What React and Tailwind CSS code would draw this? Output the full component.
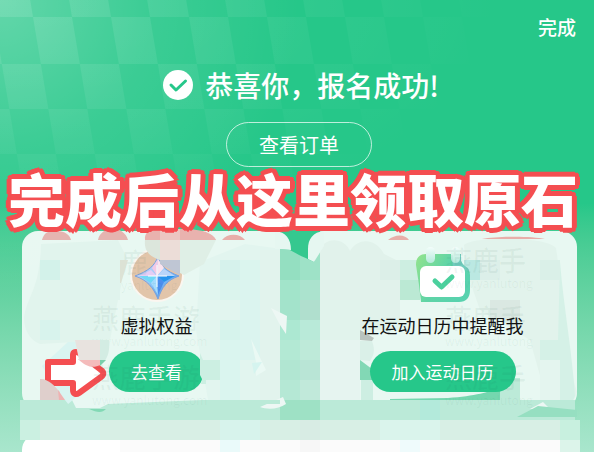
import React from "react";

const ROWS = [
  [0, 17],
  [17, 64],
  [64, 109],
  [109, 154],
  [154, 200],
];

function Checkers() {
  const slant = (y) => (y - 17) / 6;
  const tiles = [];
  ROWS.forEach(([top, bottom], row) => {
    for (let col = -3; col < 14; col += 1) {
      if ((col + row) % 2 !== 0) continue;
      const x = -6 + col * 39;
      tiles.push(
        <polygon
          key={`${row}-${col}`}
          points={`${x + slant(top)},${top} ${x + 39 + slant(top)},${top} ${x + 39 + slant(bottom)},${bottom} ${x + slant(bottom)},${bottom}`}
        />
      );
    }
  });
  return (
    <svg className="pointer-events-none absolute top-0 left-0 w-full" viewBox="0 0 594 452" aria-hidden="true">
      <defs>
        <radialGradient id="glow" gradientUnits="userSpaceOnUse" cx="0" cy="0" r="300">
          <stop offset="0" stopColor="#fff" stopOpacity="0.28" />
          <stop offset="0.5" stopColor="#fff" stopOpacity="0.1" />
          <stop offset="1" stopColor="#fff" stopOpacity="0" />
        </radialGradient>
        <radialGradient id="tile" gradientUnits="userSpaceOnUse" cx="0" cy="0" r="1" gradientTransform="scale(500 240)">
          <stop offset="0" stopColor="#fff" stopOpacity="0.12" />
          <stop offset="0.5" stopColor="#fff" stopOpacity="0.06" />
          <stop offset="1" stopColor="#fff" stopOpacity="0" />
        </radialGradient>
      </defs>
      <rect width="594" height="300" fill="url(#glow)" />
      <g fill="url(#tile)">{tiles}</g>
    </svg>
  );
}

// x, y, width, height, colour
const CELLS = [
  [40, 260, 20, 20, "#d3f2ea"],
  [60, 280, 60, 20, "#e0f3ed"],
  [40, 320, 20, 20, "#d8f3ed"],
  [220, 260, 20, 20, "#d6f2ec"],
  [240, 260, 20, 20, "#dbf5ee"],
  [200, 280, 20, 20, "#e0f5ef"],
  [220, 280, 20, 20, "#dbf4ed"],
  [240, 280, 20, 80, "#dbf4ef"],
  [220, 320, 20, 20, "#d6f3ec"],
  [260, 250, 20, 150, "#e2f3ed"],
  [220, 340, 20, 60, "#daf5ef"],
  [200, 360, 20, 20, "#ccefe2"],
  [280, 249, 20, 31, "#94dfc1"],
  [300, 252, 20, 28, "#9ee2c7"],
  [280, 280, 20, 20, "#a2e4ca"],
  [300, 280, 20, 20, "#abe3ce"],
  [280, 300, 20, 20, "#a3e3cb"],
  [300, 300, 20, 20, "#b0dfce"],
  [280, 320, 20, 20, "#ace8d2"],
  [300, 320, 20, 20, "#b9ead9"],
  [280, 340, 20, 20, "#b3e9d4"],
  [300, 340, 20, 20, "#beead9"],
  [280, 360, 20, 20, "#b1e6d2"],
  [300, 360, 20, 20, "#b9e5d6"],
  [280, 380, 20, 20, "#b5e8d5"],
  [300, 380, 20, 20, "#c1e9da"],
  [320, 300, 40, 40, "#e1f3ec"],
  [320, 340, 40, 60, "#e6f4f0"],
  [380, 260, 20, 20, "#dcefe8"],
  [400, 260, 18, 40, "#cdeee1"],
  [400, 280, 20, 20, "#bbe9d4"],
  [464, 260, 16, 20, "#bbe8e2"],
  [480, 260, 20, 20, "#dcefe9"],
  [490, 300, 30, 20, "#dae8e2"],
  [540, 360, 20, 40, "#e4f5ef"],
  [540, 260, 20, 20, "#daf0e8"],
  [20, 400, 555, 20, "#bbead8"],
  [20, 400, 20, 20, "#a6e3ca"],
  [40, 400, 20, 20, "#b1e7d5"],
  [280, 400, 40, 20, "#9ee1c5"],
  [420, 400, 20, 20, "#b3eadb"],
  [20, 420, 560, 20, "#d8efe5"],
  [20, 420, 20, 20, "#cbf0e1"],
  [60, 420, 40, 20, "#d5f1ea"],
  [220, 420, 40, 20, "#d7f3ec"],
  [300, 420, 20, 20, "#d8ece4"],
  [380, 420, 60, 20, "#daf4ec"],
  [560, 420, 20, 20, "#c8f0df"],
  [120, 440, 440, 12, "#fbfbfb"],
  [220, 440, 20, 12, "#eafafa"],
  [300, 440, 20, 12, "#f7f7f7"],
  [400, 440, 20, 12, "#effbfc"],
  [480, 440, 20, 12, "#f8f8f8"],
  [560, 440, 20, 12, "#dcf4ea"],
];

function MosaicUnder() {
  return (
    <svg className="pointer-events-none absolute top-0 left-0 w-full" viewBox="0 0 594 452" aria-hidden="true">
      <path d="M24 318 C26 298 40 290 41 244 L118 240 L127 258 L118 300 L110 340 L40 344 C30 340 24 330 24 318 Z" fill="#e1f4ed" />
      <path d="M200 262 L245 244 L282 249 L282 400 L208 400 L196 330 Z" fill="#e2f5ef" />
      <path d="M320 249 C326 237 344 237 350 251 C358 237 376 238 384 254 L400 262 V330 H360 V400 H320 Z" fill="#e1f2eb" />
      <path d="M464 245 C475 236 545 236 556 248 C562 285 566 360 577 392 C572 410 558 412 548 404 L530 340 L480 310 L466 270 Z" fill="#e2f3ec" />
      <path d="M560 262 C564 310 572 350 575 396 C568 412 558 408 540 400 V340 H558 Z" fill="#d5f1e7" />
      <path d="M42 240 C44 232 50 230 57 231 C65 231 70 235 71 240 Z M98 240 C101 225 124 225 128 240 Z" fill="#e5b4b0" />
      <path d="M200 235 C208 234 213 237 216 240 H200 Z M222 240 C227 233 240 233 245 240 Z M388 240 C395 234 405 234 409 240 Z M482 239 C498 236 532 236 545 239 Z" fill="#e8aea9" />
      <g shapeRendering="crispEdges">
        {CELLS.map(([x, y, w, h, fill], i) => (
          <rect key={i} x={x} y={y} width={w} height={h} fill={fill} />
        ))}
      </g>
      <path d="M280 231 V249 L290 250 C300 256 306 258 314 262 L320 246 V231 Z" fill="#35c88f" />
      <path d="M275 231 C286 232 291 239 291 250 L280 249 H275 Z M308 259 V249 C308 239 313 232 324 231 V246 L314 262 Z" fill="#e6f7f1" />
      <path d="M360 330 L374 338 L372 341 L360 340 Z" fill="#b9c3be" />
      <path d="M360 341 H372 C376 352 373 356 370 361 L360 360 Z" fill="#daf0e8" />
      <path d="M360 360 L372 369 L373 380 H360 Z" fill="#82d8b5" />
      <path d="M361 380 H373 V400 H361 Z" fill="#cdeee2" />
      <path d="M390 399 L448 398 C475 396 490 392 500 387 V400 H390 Z" fill="#74d7af" />
      <path d="M500 387 L515 378 H520 V400 H500 Z" fill="#bcead8" />
      <path d="M251 339 L266 370 L256 376 V362 Z" fill="#eaf9f4" />
      <path d="M252 363 L262 362 L254 374 Z" fill="#d5f4ef" />
      <path d="M271 308 L287 316 L286 334 L280 325 Z M260 407 L283 397 L286 404 C279 409 268 410 260 407 Z M530 409 L543 402 L550 409 Z" fill="#edf7f4" />
      <path d="M517 417 L538 406 L577 410 V417 Z" fill="#96dfc1" />
      <path d="M72 400 L76 408 H100 L108 404 H202 V399 H70 Z" fill="#e8f8f3" />
      <path d="M108 404 H280 V400 H202 Z" fill="#bbead8" />
      <path d="M42 366 L68 342 H76 L84 390 L66 406 L58 390 Z" fill="#d9f4f1" />
    </svg>
  );
}

const MARKS = [
  [92, 331],
  [92, 390],
  [445, 273],
  [445, 331],
  [445, 390],
];

function MosaicOver() {
  return (
    <svg className="pointer-events-none absolute top-0 left-0 z-20 w-full" viewBox="0 0 594 452" aria-hidden="true">
      <g fill="#24584a" fillOpacity="0.06" className="font-['Noto_Sans_CJK_SC',sans-serif]">
        <text x="121" y="273" fontSize="27" fontWeight="500">鹿</text>
        <text x="121" y="290" fontSize="12">yanlutong</text>
        {MARKS.map(([x, y]) => (
          <g key={`${x}-${y}`}>
            <text x={x} y={y - 2} fontSize="27" fontWeight="500">
              {x > 400 ? "燕鹿手" : "燕鹿手游"}
            </text>
            <text x={x} y={y + 15} fontSize="12">
              {x > 400 ? "www.yanlutong" : "www.yanlutong.com"}
            </text>
          </g>
        ))}
      </g>
      <path d="M145 240 C144 232 150 229 160 229 H188 C203 230 213 233 216 240 Z" fill="#e9b2ae" />
      <path d="M160 229 H180 V240 H160 Z" fill="#ecc5c1" />
      <path d="M180 240 H216 L204 264 L184 275 L180 273 Z" fill="#dfefe6" />
      <path d="M145 240 H180 V272 L160 260 C148 256 144 250 145 240 Z" fill="#dce6dc" />
      <path d="M160 240 H180 V260 H160 Z" fill="#ecddd8" />
      <path d="M160 260 H180 V275 L160 264 Z" fill="#bfc6d4" />
      <path d="M120 260 H128 L121 283 H120 Z" fill="#dce2d5" />
      <path d="M200 353 L203 360 H206 V384 H201 L202 379 L200 375 Z" fill="#ccefe2" />
      <path d="M75 340 H100 V360 H79 Z" fill="#e8e3df" />
      <path d="M78 360 H100 V365 C94 368 87 368 78 359 Z" fill="#f4bbbb" />
      <path d="M100 340 H109 C110 350 108 357 104 362 L100 365 Z" fill="#d3ece3" />
      <path d="M100 360 H106 L100 366 Z" fill="#79cfab" />
      <path d="M40 379 C47 378 54 385 60 392 V400 H40 Z" fill="#dfcfcc" />
      <path d="M58 390 L65 400 H59 Z" fill="#efb2b2" />
      <path d="M20 400 H65 L72 409 H92 C98 413 102 412 108 405 H120 V420 H20 Z" fill="#bbead8" />
      <path d="M89 409 H106 C102 413 98 413 89 409 Z" fill="#82d9b5" />
    </svg>
  );
}

function GemIcon() {
  return (
    <svg className="h-14 w-14" viewBox="0 0 56 56" aria-hidden="true">
      <defs>
        <linearGradient id="gem" x1="0" y1="0" x2="1" y2="1">
          <stop offset="0" stopColor="#f7d8f0" />
          <stop offset="0.5" stopColor="#8cc8fb" />
          <stop offset="1" stopColor="#3a83e0" />
        </linearGradient>
      </defs>
      <circle cx="28" cy="28" r="26" fill="#e2c5aa" stroke="#fbf6f0" strokeWidth="2" />
      <path d="M29 9 C31 19 37 24 50 29 C38 33 33 40 29 52 C24 40 18 33 6 29 C19 24 26 19 29 9 Z" fill="url(#gem)" stroke="#7ba0dc" strokeWidth="1" strokeLinejoin="round" />
      <path d="M29 12 L23 21 L28 29 Z" fill="#f1c9e6" />
      <path d="M29 12 L35 21 L28 29 Z" fill="#fae3ee" />
      <path d="M10 29 L22 23 L28 29 Z" fill="#e4cdf5" />
      <path d="M10 29 L28 29 L22 36 Z" fill="#70d8f7" />
      <path d="M28 29 L22 36 L29 48 Z" fill="#a5dcff" />
      <path d="M28 29 L35 35 L29 48 Z" fill="#4b8dee" />
      <path d="M28 29 L46 29 L35 35 Z" fill="#2793ed" />
      <path d="M28 29 L35 22 L46 29 Z" fill="#b8d4fa" />
      <path d="M28 18 V40 M19 29 H38" stroke="#fff" strokeWidth="1" />
    </svg>
  );
}

function CalendarIcon() {
  return (
    <svg className="h-14 w-14" viewBox="0 0 56 56" aria-hidden="true">
      <defs>
        <linearGradient id="cal" x1="0" y1="0" x2="1" y2="0.5">
          <stop offset="0" stopColor="#94e48c" />
          <stop offset="0.55" stopColor="#5fd4a6" />
          <stop offset="1" stopColor="#58d2ae" />
        </linearGradient>
        <linearGradient id="ring" x1="0" y1="0" x2="0" y2="1">
          <stop offset="0" stopColor="#f3fdfb" />
          <stop offset="1" stopColor="#b5eadc" />
        </linearGradient>
      </defs>
      <path d="M1 18 C1 11 4 7 11 7 H46 V14 C48 20 55 20 55 28 V43 C55 51 51 55 44 55 H6 L4 38 Z" fill="url(#cal)" />
      <path d="M36 7 H46 V14 C48 20 54 20 54 24 L38 20 Z" fill="#71cbbd" />
      <rect x="5" y="19" width="45" height="31" rx="6" fill="#fff" />
      <rect x="11" y="0" width="9" height="16" rx="4.5" fill="url(#ring)" />
      <rect x="36" y="0" width="9" height="16" rx="4.5" fill="url(#ring)" />
      <path d="M20 34 L26.500 40 L37 30" fill="none" stroke="#4bd09d" strokeWidth="5" strokeLinecap="round" strokeLinejoin="round" />
    </svg>
  );
}

function Card({ icon, title, action }) {
  return (
    <article className="h-[178px] flex-1 rounded-2xl bg-[#e8f8f2] pt-4">
      <div className="relative z-10 flex flex-col items-center">
        {icon}
        <h2 className="mt-2 text-[18px] leading-7 whitespace-nowrap text-[#111]">{title}</h2>
        <button type="button" className="mt-3 h-[41px] rounded-full bg-[#26c78a] px-[22px] text-[17px] leading-6 whitespace-nowrap text-white">
          {action}
        </button>
      </div>
    </article>
  );
}

export default function App() {
  return (
    <main className="relative overflow-hidden bg-linear-to-b from-[#26c789] from-45% to-[#a9e6cd] font-['Noto_Sans_CJK_SC',sans-serif]">
      <Checkers />
      <header className="relative flex justify-end px-[18px] pt-[11px]">
        <button type="button" className="text-[19px] leading-8 font-medium text-white">
          完成
        </button>
      </header>

      <section className="relative flex flex-col items-center pl-1">
        <div className="mt-5 flex items-center gap-3 pl-1">
          <svg className="h-[30px] w-[30px]" viewBox="0 0 30 30" aria-hidden="true">
            <circle cx="15" cy="15" r="15" fill="#fff" />
            <path d="M8 15 L13 20 L22.500 11" fill="none" stroke="#26c78a" strokeWidth="3" strokeLinecap="round" strokeLinejoin="round" />
          </svg>
          <h1 className="text-[28px] leading-[44px] font-medium whitespace-nowrap text-white">恭喜你，报名成功!</h1>
        </div>
        <button type="button" className="mt-[15px] h-[45px] w-[146px] rounded-full border border-white/70 text-[20px] leading-7 text-white">
          查看订单
        </button>
      </section>

      <div className="relative z-30 flex h-16 items-center justify-center pr-2 pb-1">
        <p className="text-[57px] leading-[60px] font-black whitespace-nowrap text-white [text-shadow:5px_0_#f44e51,-5px_0_#f44e51,0_5px_#f44e51,0_-5px_#f44e51,3px_4px_#f44e51,-3px_4px_#f44e51,3px_-4px_#f44e51,-3px_-4px_#f44e51,4px_3px_#f44e51,-4px_3px_#f44e51,4px_-3px_#f44e51,-4px_-3px_#f44e51]">
          完成后从这里领取原石
        </p>
      </div>

      <section className="flex gap-[17px] pr-[17px] pl-[22px]">
        <Card icon={<GemIcon />} title="虚拟权益" action="去查看" />
        <Card icon={<CalendarIcon />} title="在运动日历中提醒我" action="加入运动日历" />
      </section>

      <div className="pt-[25px] pr-[17px] pl-[22px]">
        <div className="h-[18px] rounded-t-2xl bg-white" />
      </div>

      <MosaicUnder />
      <svg className="pointer-events-none absolute top-0 left-0 z-10 w-full" viewBox="0 0 594 452" aria-hidden="true">
        <path d="M48 362 H73 V355 C73 352 76 351 79 353 L101 370 C104 372 104 375 101 377 L79 393 C76 395 73 394 73 390 V383 H48 Z" fill="#fff" stroke="#f44e51" strokeWidth="6" strokeLinejoin="round" />
      </svg>
      <MosaicOver />
    </main>
  );
}
